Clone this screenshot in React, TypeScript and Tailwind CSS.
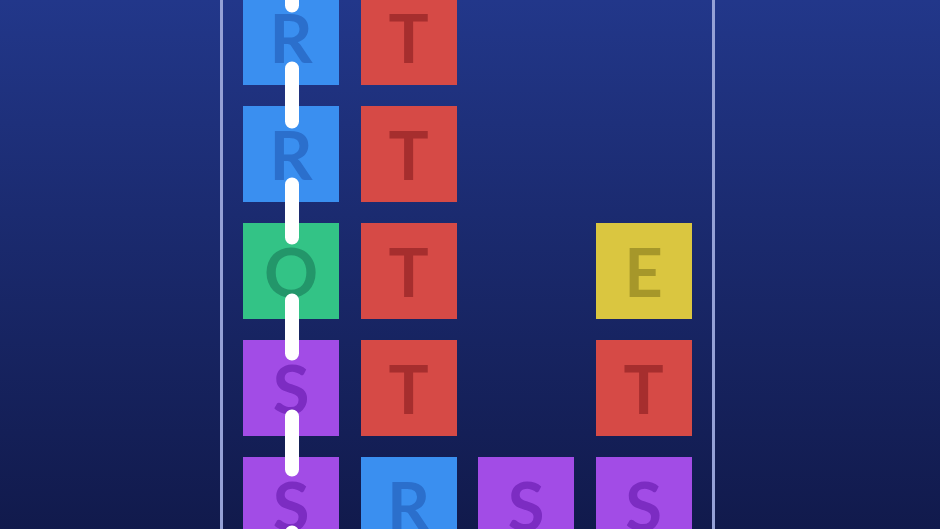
import React from "react";

type Tile = { ch: string; tone: "blue" | "red" | "green" | "purple" | "yellow" } | null;

const TONES: Record<NonNullable<Tile>["tone"], string> = {
  blue: "bg-[#3a8ff0] text-[#2b6fcc]",
  red: "bg-[#d64a46] text-[#a62e2e]",
  green: "bg-[#33c386] text-[#23966a]",
  purple: "bg-[#a24ce6] text-[#7c2cc2]",
  yellow: "bg-[#dac640] text-[#a6972a]",
};

const ROWS: Tile[][] = [
  [{ ch: "R", tone: "blue" }, { ch: "T", tone: "red" }, null, null],
  [{ ch: "R", tone: "blue" }, { ch: "T", tone: "red" }, null, null],
  [{ ch: "O", tone: "green" }, { ch: "T", tone: "red" }, null, { ch: "E", tone: "yellow" }],
  [{ ch: "S", tone: "purple" }, { ch: "T", tone: "red" }, null, { ch: "T", tone: "red" }],
  [
    { ch: "S", tone: "purple" },
    { ch: "R", tone: "blue" },
    { ch: "S", tone: "purple" },
    { ch: "S", tone: "purple" },
  ],
];

function Cell({ tile }: { tile: Tile }) {
  if (!tile) return <div />;
  return (
    <div
      className={`flex items-center justify-center text-[67px] font-bold leading-none ${TONES[tile.tone]}`}
      style={{ fontFamily: "Lato, 'Open Sans', sans-serif" }}
    >
      {tile.ch}
    </div>
  );
}

export default function App() {
  return (
    <div className="h-[529px] w-[940px] overflow-hidden bg-gradient-to-b from-[#22378a] to-[#111a4c] pl-[220px]">
      <div className="relative flex h-full w-[494.5px] flex-col border-x-[3px] border-[#95a1d6] px-[20px]">
        <div className="-mt-[11px] grid grid-cols-[repeat(4,96px)] auto-rows-[96px] gap-x-[21.5px] gap-y-[21px]">
          {ROWS.flatMap((row, r) => row.map((t, c) => <Cell key={`${r}-${c}`} tile={t} />))}
        </div>

        {/* dashed swipe trail over the first column */}
        <svg className="pointer-events-none absolute left-[59px] top-0" width="20" height="529">
          <line
            x1="10"
            y1="-47.5"
            x2="10"
            y2="560"
            stroke="#ffffff"
            strokeWidth="14"
            strokeLinecap="round"
            strokeDasharray="53 63"
          />
        </svg>
      </div>
    </div>
  );
}
